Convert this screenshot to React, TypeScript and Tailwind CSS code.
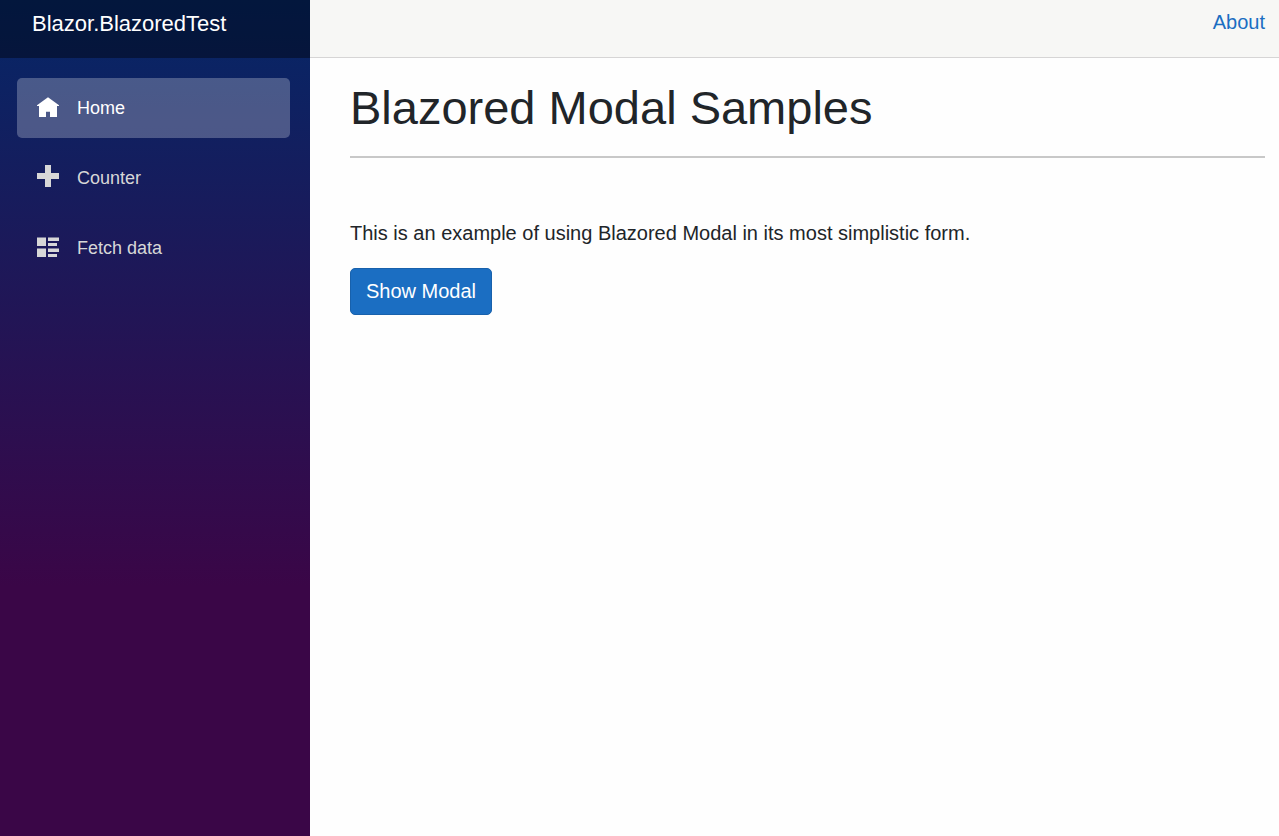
import type { ReactNode } from 'react';

function HomeIcon() {
  return (
    <svg viewBox="0 0 22 22" className="-mt-1 size-[22px] shrink-0" fill="currentColor" aria-hidden="true">
      <path d="M11 2.3L0 10.3V11h2v11h7v-5.3h4V22h7V11h2v-.7L11 2.3z" />
    </svg>
  );
}

function PlusIcon() {
  return (
    <svg viewBox="0 0 22 22" className="-mt-1 size-[22px] shrink-0" fill="currentColor" aria-hidden="true">
      <path d="M8 0v8H0v6h8v8h6v-8h8V8h-8V0H8z" />
    </svg>
  );
}

function ListRichIcon() {
  return (
    <svg viewBox="0 0 22 22" className="-mt-1 size-[22px] shrink-0" fill="currentColor" aria-hidden="true">
      <path d="M0 2.5h9V11H0zM11 2.5h11V6H11zM11 8h9v3h-9zM0 13.5h9V22H0zM11 13.5h11V17H11zM11 19h9v3h-9z" />
    </svg>
  );
}

function NavItem({ icon, label, active }: { icon: ReactNode; label: string; active?: boolean }) {
  return (
    <li>
      <a
        href="#"
        aria-current={active ? 'page' : undefined}
        className={
          active
            ? 'flex h-15 items-center gap-[18px] rounded-[5px] bg-white/25 pl-5 text-white'
            : 'flex h-15 items-center gap-[18px] rounded-[5px] pl-5 text-[#d7d7d7]'
        }
      >
        {icon}
        {label}
      </a>
    </li>
  );
}

export default function App() {
  return (
    <div className="flex min-h-screen bg-[#fefefe] font-['Liberation_Sans',Arial,sans-serif] text-xl text-[#212529]">
      <aside className="w-[310px] shrink-0 bg-[linear-gradient(180deg,#052767_0%,#3a0647_70%)]">
        <div className="flex h-[58px] items-start bg-black/40 px-8 pt-2">
          <a href="#" className="text-[22px] leading-8 text-white">
            Blazor.BlazoredTest
          </a>
        </div>
        <nav>
          <ul className="flex flex-col gap-[10px] py-5 pr-5 pl-[17px] text-lg">
            <NavItem icon={<HomeIcon />} label="Home" active />
            <NavItem icon={<PlusIcon />} label="Counter" />
            <NavItem icon={<ListRichIcon />} label="Fetch data" />
          </ul>
        </nav>
      </aside>
      <div className="flex min-w-0 flex-1 flex-col">
        <header className="flex h-[58px] items-start justify-end border-b border-[#d6d5d5] bg-[#f7f7f5] pt-2 pr-[14px]">
          <a href="#" className="text-[#1b6ec2]">
            About
          </a>
        </header>
        <main className="pt-5 pr-[14px] pl-10">
          <h1 className="text-[47px] leading-[60px]">Blazored Modal Samples</h1>
          <hr className="mt-[18px] border-t-2 border-[#c8c8c8]" />
          <p className="mt-[60px] leading-[30px]">
            This is an example of using Blazored Modal in its most simplistic form.
          </p>
          <button type="button" className="mt-5 rounded-[5px] border border-[#1861ac] bg-[#1b6ec2] px-[15px] pt-2 pb-[9px] leading-7 text-white">
            Show Modal
          </button>
        </main>
      </div>
    </div>
  );
}
